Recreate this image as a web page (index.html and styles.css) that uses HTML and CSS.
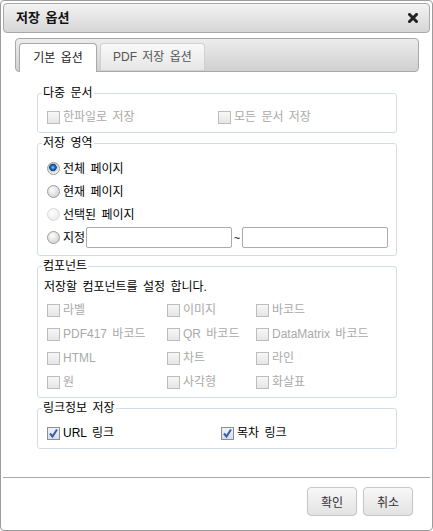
FILE: index.html
```html
<!DOCTYPE html>
<html lang="ko">
<head>
  <meta charset="UTF-8">
  <title>저장 옵션</title>
  <link rel="stylesheet" href="styles.css">
</head>
<body>
  <div class="dialog">
    <div class="titlebar">
      <span class="title">저장 옵션</span>
      <svg class="close" width="10" height="10" viewBox="0 0 10 10">
        <path d="M1.5 1.5 L8.5 8.5 M8.5 1.5 L1.5 8.5" stroke="#222" stroke-width="3" stroke-linecap="square"/>
      </svg>
    </div>

    <div class="dialog-body">
      <div class="tabs">
        <div class="tab active">기본 옵션</div>
        <div class="tab">PDF 저장 옵션</div>
      </div>

      <div class="panel">
        <!-- 다중 문서 -->
        <fieldset class="group group-multi">
          <legend>다중 문서</legend>
          <div class="row cols-multi">
            <label class="opt disabled"><span class="cb"></span>한파일로 저장</label>
            <label class="opt disabled"><span class="cb"></span>모든 문서 저장</label>
          </div>
        </fieldset>

        <!-- 저장 영역 -->
        <fieldset class="group group-range">
          <legend>저장 영역</legend>
          <label class="opt radio-row"><span class="rb checked"></span>전체 페이지</label>
          <label class="opt radio-row"><span class="rb"></span>현재 페이지</label>
          <label class="opt radio-row"><span class="rb disabled"></span>선택된 페이지</label>
          <div class="opt radio-row">
            <span class="rb"></span>지정<input class="page-input" type="text"><span class="tilde">~</span><input class="page-input" type="text">
          </div>
        </fieldset>

        <!-- 컴포넌트 -->
        <fieldset class="group group-comp">
          <legend>컴포넌트</legend>
          <div class="desc">저장할 컴포넌트를 설정 합니다.</div>
          <div class="comp-grid">
            <label class="opt disabled"><span class="cb"></span>라벨</label>
            <label class="opt disabled"><span class="cb"></span>이미지</label>
            <label class="opt disabled"><span class="cb"></span>바코드</label>
            <label class="opt disabled"><span class="cb"></span>PDF417 바코드</label>
            <label class="opt disabled"><span class="cb"></span>QR 바코드</label>
            <label class="opt disabled"><span class="cb"></span>DataMatrix 바코드</label>
            <label class="opt disabled"><span class="cb"></span>HTML</label>
            <label class="opt disabled"><span class="cb"></span>차트</label>
            <label class="opt disabled"><span class="cb"></span>라인</label>
            <label class="opt disabled"><span class="cb"></span>원</label>
            <label class="opt disabled"><span class="cb"></span>사각형</label>
            <label class="opt disabled"><span class="cb"></span>화살표</label>
          </div>
        </fieldset>

        <!-- 링크정보 저장 -->
        <fieldset class="group group-link">
          <legend>링크정보 저장</legend>
          <div class="row cols-link">
            <label class="opt"><span class="cb checked"><svg width="11" height="11" viewBox="0 0 11 11"><path d="M2 5.5 L4.5 8.5 L9 1.5" fill="none" stroke="#3b5cab" stroke-width="2"/></svg></span>URL 링크</label>
            <label class="opt"><span class="cb checked"><svg width="11" height="11" viewBox="0 0 11 11"><path d="M2 5.5 L4.5 8.5 L9 1.5" fill="none" stroke="#3b5cab" stroke-width="2"/></svg></span>목차 링크</label>
          </div>
        </fieldset>
      </div>
    </div>

    <div class="footer">
      <button class="btn" type="button">확인</button>
      <button class="btn" type="button">취소</button>
    </div>
  </div>
</body>
</html>
```

FILE: styles.css
```css
body {
  margin: 0;
  background: #fff;
  font-family: "Liberation Sans", "Noto Sans CJK KR", sans-serif;
  font-size: 12px;
  word-spacing: 2px;
  color: #000;
}
.dialog {
  width: 433px;
  height: 531px;
  box-sizing: border-box;
  border: 1px solid #9c9c9c;
  border-radius: 4px;
  padding: 2px;
  display: flex;
  flex-direction: column;
}
/* Title bar */
.titlebar {
  height: 30px;
  box-sizing: border-box;
  border: 1px solid #a9a9a9;
  border-radius: 4px;
  background: linear-gradient(#f3f3f3, #d6d6d6);
  display: flex;
  align-items: center;
  justify-content: space-between;
  padding: 0 11px 0 12px;
}
.title {
  font-weight: bold;
  font-size: 13px;
  color: #111;
  line-height: 16px;
}
.close {
  display: block;
}
.dialog-body {
  flex: 1;
}
/* Tabs */
.tabs {
  margin: 5px 11px 0 12px;
  height: 34px;
  box-sizing: border-box;
  border: 1px solid #a9a9a9;
  border-radius: 4px;
  background: linear-gradient(#ececec, #d0d0d0);
  padding: 4px 3px 0;
  display: flex;
  align-items: flex-start;
  gap: 3px;
}
.tab {
  height: 27px;
  box-sizing: border-box;
  padding: 0 12px;
  border: 1px solid #d0d0d0;
  border-bottom: none;
  border-radius: 4px 4px 0 0;
  background: linear-gradient(#f9f9f9, #e6e6e6);
  color: #555;
  line-height: 27px;
}
.tab.active {
  height: 29px;
  width: 78px;
  text-align: center;
  padding: 0;
  border-color: #a9a9a9;
  background: #fff;
  color: #222;
  line-height: 28px;
}
/* Panel */
.panel {
  padding: 13px 0 0 34px;
}
.group {
  width: 360px;
  box-sizing: border-box;
  margin: 0;
  border: 1px solid #d4dde6;
  border-radius: 3px;
  padding: 0 8px 5px 9px;
  min-width: 0;
}
.group + .group {
  margin-top: 2px;
}
.group legend {
  line-height: 16px;
  padding: 0 1px;
  margin-left: -5px;
}
.group-multi .row {
  padding-top: 6px;
}
.group-range {
  padding-top: 6px;
  padding-bottom: 6px;
}
.group-comp {
  padding-top: 3px;
  padding-bottom: 3px;
}
.group-link .row {
  padding-top: 7px;
}
.row {
  display: grid;
  height: 20px;
}
.cols-multi {
  grid-template-columns: 171px auto;
}
.cols-link {
  grid-template-columns: 174px auto;
}
.opt {
  display: flex;
  align-items: center;
  gap: 3px;
  white-space: nowrap;
  line-height: 16px;
}
.opt.disabled {
  color: #a9a9a9;
}
.radio-row {
  height: 23px;
}
.desc {
  height: 21px;
  line-height: 21px;
  margin-left: -3px;
}
.comp-grid {
  display: grid;
  grid-template-columns: 120px 89px auto;
  grid-auto-rows: 24px;
}
/* Checkbox glyph */
.cb {
  width: 13px;
  height: 13px;
  box-sizing: border-box;
  border: 1px solid #bdbdbd;
  background: linear-gradient(#f7f7f7, #e6e6e6);
  display: flex;
  align-items: center;
  justify-content: center;
  flex: none;
}
.cb.checked {
  border-color: #8e8e8e;
  background: linear-gradient(#eef2f8, #d6dde8);
}
.cb svg {
  display: block;
}
/* Radio glyph */
.rb {
  width: 13px;
  height: 13px;
  box-sizing: border-box;
  border-radius: 50%;
  border: 1px solid #9d9d9d;
  background: radial-gradient(circle at 40% 35%, #ffffff, #d4d4d4 75%);
  flex: none;
}
.rb.checked {
  background: radial-gradient(circle at 45% 40%, #8fd0ff 0, #1a6ab3 2px, #0d4a8c 3.5px, #c9c9c9 4px, #f1f1f1 6px);
}
.rb.disabled {
  border-color: #dadada;
  background: radial-gradient(circle at 40% 35%, #ffffff, #ececec 75%);
}
.page-input {
  width: 146px;
  height: 21px;
  box-sizing: border-box;
  margin: 0;
  margin-left: -2px;
  border: 1px solid #ababab;
  border-radius: 2px;
  background: #fff;
  font: inherit;
}
.tilde {
  width: 8px;
  margin: 0 -2px 0 -2px;
  text-align: center;
  font-size: 11px;
}
.tilde + .page-input {
  margin-left: 0;
}
/* Footer */
.footer {
  border-top: 1px solid #a9a9a9;
  height: 51px;
  box-sizing: border-box;
  padding: 9px 17px 0 0;
  display: flex;
  justify-content: flex-end;
  align-items: flex-start;
  gap: 6px;
}
.btn {
  width: 50px;
  height: 29px;
  border: 1px solid #c6c6c6;
  border-radius: 4px;
  background: linear-gradient(#f8f8f8, #e2e2e2);
  font: inherit;
  color: #333;
  padding: 0;
}
```
